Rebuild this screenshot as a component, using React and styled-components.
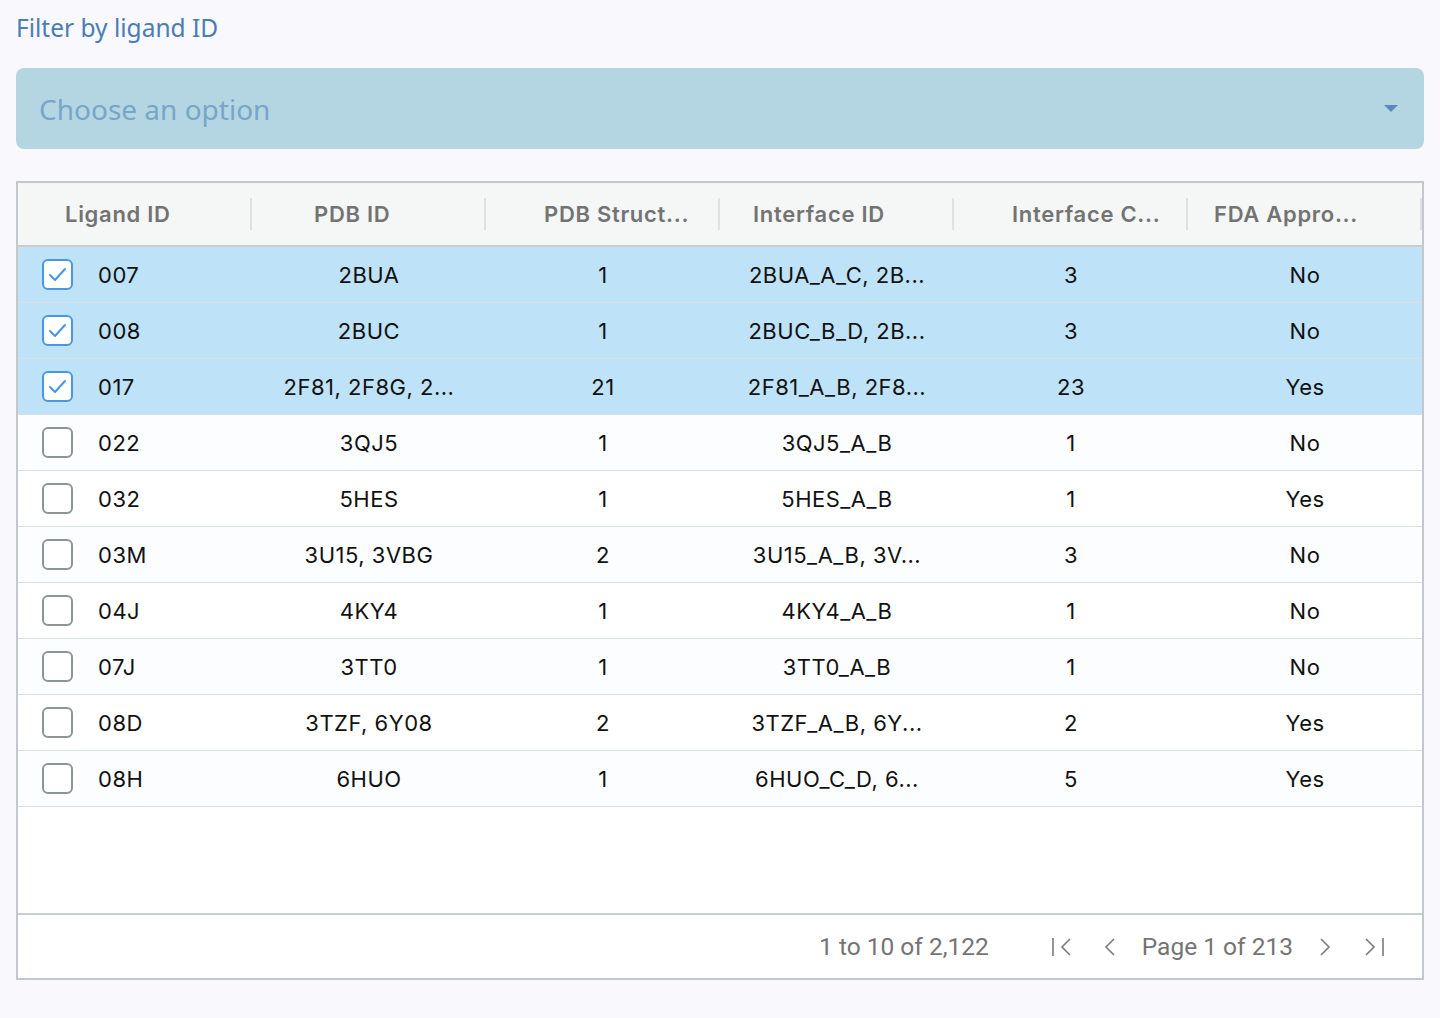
import React from "react";
import styled, { createGlobalStyle } from "styled-components";

const GlobalStyle = createGlobalStyle`
  body {
    margin: 0;
    background: #f8f8fd;
    font-family: Inter, "Liberation Sans", sans-serif;
  }
`;

const Page = styled.div`
  padding: 10px 16px 0 16px;
  display: flex;
  flex-direction: column;
`;

const Label = styled.div`
  font-family: "Noto Sans", sans-serif;
  font-size: 24.5px;
  color: #4b7db3;
  line-height: 36px;
`;

const Select = styled.div`
  margin-top: 22px;
  height: 81px;
  border-radius: 8px;
  background: #b4d6e2;
  display: flex;
  align-items: center;
  justify-content: space-between;
  padding: 0 26px 0 23px;
  box-sizing: border-box;
`;

const Placeholder = styled.span`
  font-family: "Noto Sans", sans-serif;
  font-size: 28px;
  color: #78a5c8;
`;

const Caret = styled.span`
  width: 0;
  height: 0;
  border-left: 7px solid transparent;
  border-right: 7px solid transparent;
  border-top: 7px solid #5a88bd;
`;

const Grid = styled.div`
  margin-top: 32px;
  height: 799px;
  box-sizing: border-box;
  border: 2px solid #c3c8ce;
  background: #fff;
  display: flex;
  flex-direction: column;
`;

const HeaderRow = styled.div`
  display: grid;
  grid-template-columns: repeat(6, 234px);
  height: 62px;
  background: #f5f6f6;
  border-bottom: 2px solid #c9cdd2;
`;

const HeaderCell = styled.div`
  position: relative;
  display: flex;
  align-items: center;
  padding-left: ${(p) => p.$pad}px;
  font-size: 22px;
  font-weight: 600;
  letter-spacing: 0.7px;
  color: #737373;
  white-space: nowrap;

  &::after {
    content: "";
    position: absolute;
    right: 0;
    top: 15px;
    width: 2px;
    height: 32px;
    background: #dfe2e3;
  }
`;

const Body = styled.div`
  flex: 1;
`;

const Row = styled.div`
  display: grid;
  grid-template-columns: repeat(6, 234px);
  height: 55px;
  border-bottom: 1px solid #dcdfe2;
  background: ${(p) => (p.$selected ? "#bee2f8" : p.$odd ? "#fcfdff" : "#fff")};
`;

const Cell = styled.div`
  display: flex;
  align-items: center;
  justify-content: ${(p) => (p.$left ? "flex-start" : "center")};
  padding-left: ${(p) => (p.$left ? 24 : 0)}px;
  font-size: 22px;
  letter-spacing: 0.5px;
  color: #111;
  white-space: nowrap;
`;

const Check = styled.span`
  width: 31px;
  height: 31px;
  box-sizing: border-box;
  border-radius: 6px;
  border: 2px solid ${(p) => (p.$on ? "#4896e6" : "#8c9595")};
  background: #fff;
  margin-right: 25px;
  display: flex;
  align-items: center;
  justify-content: center;
`;

const Footer = styled.div`
  height: 63px;
  border-top: 2px solid #c9cdd2;
  display: flex;
  align-items: center;
  justify-content: flex-end;
  padding-right: 38px;
  font-family: Roboto, sans-serif;
  font-size: 24.5px;
  color: #747474;
`;

const Summary = styled.span`
  margin-right: 63px;
`;

const Nav = styled.svg`
  overflow: visible;
  margin-right: ${(p) => p.$after}px;
`;

const PageText = styled.span`
  margin-right: 27px;
`;

const NavIcon = ({ w, d, after }) => (
  <Nav $after={after} width={w} height="18" viewBox={`0 0 ${w} 18`} fill="none" stroke="#7a7a7a" strokeWidth="1.6">
    <path d={d} />
  </Nav>
);

const rows = [
  ["007", "2BUA", "1", "2BUA_A_C, 2B...", "3", "No", true],
  ["008", "2BUC", "1", "2BUC_B_D, 2B...", "3", "No", true],
  ["017", "2F81, 2F8G, 2...", "21", "2F81_A_B, 2F8...", "23", "Yes", true],
  ["022", "3QJ5", "1", "3QJ5_A_B", "1", "No", false],
  ["032", "5HES", "1", "5HES_A_B", "1", "Yes", false],
  ["03M", "3U15, 3VBG", "2", "3U15_A_B, 3V...", "3", "No", false],
  ["04J", "4KY4", "1", "4KY4_A_B", "1", "No", false],
  ["07J", "3TT0", "1", "3TT0_A_B", "1", "No", false],
  ["08D", "3TZF, 6Y08", "2", "3TZF_A_B, 6Y...", "2", "Yes", false],
  ["08H", "6HUO", "1", "6HUO_C_D, 6...", "5", "Yes", false],
];

const headers = [
  ["Ligand ID", 47],
  ["PDB ID", 62],
  ["PDB Struct...", 58],
  ["Interface ID", 33],
  ["Interface C...", 58],
  ["FDA Appro...", 26],
];

export default function App() {
  return (
    <>
      <GlobalStyle />
      <Page>
        <Label>Filter by ligand ID</Label>
        <Select>
          <Placeholder>Choose an option</Placeholder>
          <Caret />
        </Select>
        <Grid>
          <HeaderRow>
            {headers.map(([t, p]) => (
              <HeaderCell key={t} $pad={p}>{t}</HeaderCell>
            ))}
          </HeaderRow>
          <Body>
            {rows.map((r, i) => (
              <Row key={r[0]} $selected={r[6]} $odd={i % 2 === 1}>
                <Cell $left>
                  <Check $on={r[6]}>
                    {r[6] && (
                      <svg width="21" height="21" viewBox="0 0 21 21" fill="none" stroke="#4896e6" strokeWidth="2" strokeLinecap="round" strokeLinejoin="round">
                        <path d="M3 11 L8 16 L18 5" />
                      </svg>
                    )}
                  </Check>
                  {r[0]}
                </Cell>
                {r.slice(1, 6).map((v, j) => (
                  <Cell key={j}>{v}</Cell>
                ))}
              </Row>
            ))}
          </Body>
          <Footer>
            <Summary>1 to 10 of 2,122</Summary>
            <NavIcon w={19} after={33} d="M1 0 V18 M18 1 L10 9 L18 17" />
            <NavIcon w={11} after={27} d="M10 1 L2 9 L10 17" />
            <PageText>Page 1 of 213</PageText>
            <NavIcon w={11} after={34} d="M1 1 L9 9 L1 17" />
            <NavIcon w={19} after={0} d="M1 1 L9 9 L1 17 M18 0 V18" />
          </Footer>
        </Grid>
      </Page>
    </>
  );
}
